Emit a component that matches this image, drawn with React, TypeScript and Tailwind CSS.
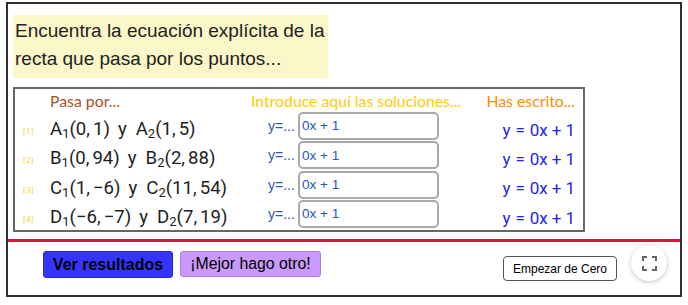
import React from "react";

const rows = [
  { n: 1, L: "A", p1: ["0", "1"], p2: ["1", "5"] },
  { n: 2, L: "B", p1: ["0", "94"], p2: ["2", "88"] },
  { n: 3, L: "C", p1: ["1", "−6"], p2: ["11", "54"] },
  { n: 4, L: "D", p1: ["−6", "−7"], p2: ["7", "19"] },
];

function Pt({ L, i, c }: { L: string; i: number; c: string[] }) {
  return (
    <span className="whitespace-nowrap">
      {L}
      <span className="text-[13px] align-[-3px]">{i}</span>({c[0]},
      <span className="inline-block w-[3px]" />
      {c[1]})
    </span>
  );
}

export default function App() {
  return (
    <div className="relative w-[688px] h-[305px] bg-white overflow-hidden font-['Liberation_Sans',Arial,sans-serif]">
      <div className="ml-[6px] mt-[2px] w-[676px] h-[295px] border-2 border-[#2e2e2e] flex flex-col">
        {/* question box */}
        <div className="ml-[5px] mt-[11px] w-[315px] h-[63px] bg-[#fcf7c8] pl-[2px] pt-[2px] text-[19px] leading-[28px] text-[#222]">
          Encuentra la ecuación explícita de la
          <br />
          recta que pasa por los puntos...
        </div>

        {/* table */}
        <div className="ml-[5px] mt-[9px] w-[572px] h-[145px] border-2 border-[#666] flex flex-col">
          <div className="flex h-[23px] pt-[4px] text-[15.8px] leading-none font-['Lato',sans-serif]">
            <div className="w-[35px]" />
            <div className="w-[201px] text-[#a8502a]">Pasa por...</div>
            <div className="text-[#ffcc00]">Introduce aquí las soluciones...</div>
            <div className="ml-auto pr-[8px] text-[#ff8a00]">Has escrito...</div>
          </div>
          {rows.map((r) => (
            <div key={r.n} className="flex items-start h-[29.4px]">
              <div className="w-[35px] pl-[8px] pt-[15px] text-[9px] leading-none text-[#f0d020] font-['Liberation_Serif',serif]">
                [{r.n}]
              </div>
              <div className="w-[218px] pt-[8px] text-[18.6px] leading-none text-[#1e1e1e] font-['Roboto',sans-serif] whitespace-nowrap">
                <Pt L={r.L} i={1} c={r.p1} />
                <span className="inline-block w-[8px]" />y
                <span className="inline-block w-[9px]" />
                <Pt L={r.L} i={2} c={r.p2} />
              </div>
              <div className="w-[30px] pt-[7px] text-[14px] leading-none text-[#2f55b5]">
                y=...
              </div>
              <div className="w-[141px] h-[28px] border-2 border-[#a9a9a9] rounded-[5px] bg-white flex items-center pl-[2px] text-[13.5px] leading-none text-[#2457c2]">
                0x + 1
              </div>
              <div className="flex-1 pr-[8px] pt-[9.5px] text-right text-[17px] leading-none text-[#2424e6] font-['Roboto',sans-serif] whitespace-nowrap">
                y<span className="inline-block w-[5px]" />=<span className="inline-block w-[5px]" />0x
                <span className="inline-block w-[4px]" />+<span className="inline-block w-[4px]" />1
              </div>
            </div>
          ))}
        </div>

        {/* red separator */}
        <div className="mt-[7px] h-[3px] bg-[#dc143c]" />

        {/* buttons */}
        <div className="flex items-start mt-[9px] ml-[35px]">
          <button className="w-[130px] h-[27px] bg-[#3535ff] border border-[#2a2ad0] rounded-[3px] text-[16px] font-bold text-black leading-none">
            Ver resultados
          </button>
          <button className="ml-[7px] w-[141px] h-[26px] bg-[#c999fb] border border-[#a880dc] rounded-[3px] text-[15.8px] text-black leading-none">
            ¡Mejor hago otro!
          </button>
          <button className="ml-[182px] mt-[5px] w-[114px] h-[25px] bg-white border-[1.5px] border-[#555] rounded-[4px] text-[12px] text-black leading-none">
            Empezar de Cero
          </button>
        </div>
      </div>

      {/* fullscreen button */}
      <div className="absolute left-[631px] top-[245px] w-[36px] h-[36px] rounded-full bg-white shadow-[0_1px_4px_rgba(0,0,0,0.25)] flex items-center justify-center">
        <svg width="15" height="15" viewBox="0 0 15 15" fill="none" stroke="#666" strokeWidth="2">
          <path d="M1 5V1h4M10 1h4v4M14 10v4h-4M5 14H1v-4" />
        </svg>
      </div>
    </div>
  );
}
